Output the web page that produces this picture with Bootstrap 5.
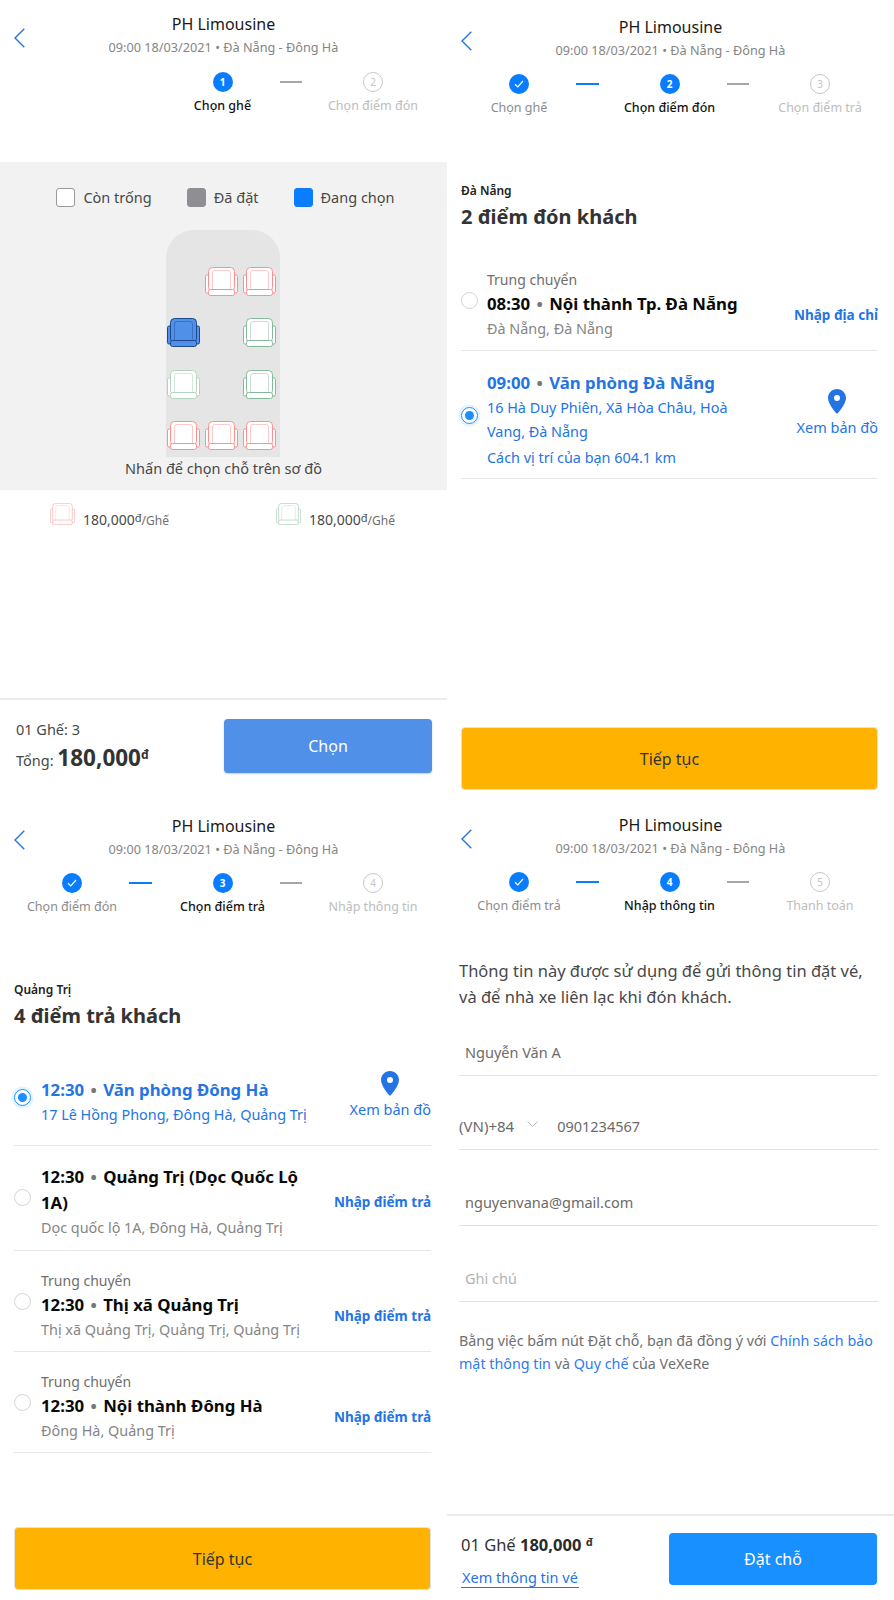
<!DOCTYPE html>
<html lang="vi">
<head>
<meta charset="utf-8">
<title>PH Limousine</title>
<link rel="stylesheet" href="https://cdn.jsdelivr.net/npm/bootstrap@5.3.0/dist/css/bootstrap.min.css">
<style>
body{margin:0;background:#fff;font-family:"Noto Sans","Open Sans","Liberation Sans",sans-serif;color:#484848;}
.board{display:grid;grid-template-columns:447px 447px;grid-template-rows:800px 800px;width:894px;height:1600px;overflow:hidden;}
.pane{display:flex;flex-direction:column;min-width:0;overflow:hidden;}
.head{position:relative;text-align:center;}
.head-a{padding-top:12px}.head-b{padding-top:15px}.head-c{padding-top:14px}.head-d{padding-top:13px}
.back{position:absolute;left:14px;width:11px;height:20px;}
.head-a .back{top:28px}.head-b .back{top:31px}.head-c .back{top:30px}.head-d .back{top:29px}
.ttl{font-size:16px;line-height:24px;color:#1a1a1a;}
.when{font-size:12.7px;line-height:22px;color:#858585;}
.steps{display:flex;justify-content:center;margin-top:13px;padding-right:2px;}
.head-a .steps{margin-top:14px}
.stp{width:128px;display:flex;flex-direction:column;align-items:center;}
.dot{width:20px;height:20px;border-radius:50%;background:#0a7cff;color:#fff;font-size:10px;font-weight:700;line-height:20px;display:flex;align-items:center;justify-content:center;}
.dot.off{background:#fff;border:1px solid #c8c8c8;color:#c4c4c4;font-weight:400;}
.stp-t{font-size:12.5px;line-height:18px;margin-top:5px;color:#8c8c8c;white-space:nowrap;}
.stp.now .stp-t{color:#141414;font-weight:500;}
.stp.todo .stp-t{color:#bdbdbd;}
.lnk{width:22.5px;height:2px;margin:9px 7px 0 -7px;background:#a6a6a6;flex:none;}
.lnk.ok{background:#0a7cff;}
.band{background:#f2f2f2;height:328px;margin-top:47px;display:flex;flex-direction:column;align-items:center;padding-top:24px;}
.lgd{display:flex;gap:35px;font-size:14.5px;line-height:22px;color:#484848;margin-left:4px;}
.box{width:19px;height:19px;border-radius:3px;border:1px solid #9a9a9a;background:#fff;margin-right:8px;}
.box.taken{background:#8e8e93;border-color:#8e8e93;}
.box.pick{background:#0a7cff;border-color:#0a7cff;}
.bus{width:114px;height:227px;margin:22px 2px 0 0;background:#e5e5e5;border-radius:28px 28px 0 0;padding:37px 0 0 1px;display:grid;grid-template-columns:repeat(3,38px);grid-auto-rows:51.4px;justify-items:start;align-content:start;}
.seat{width:33px;height:29px;display:block;}
.cap{font-size:14.5px;line-height:22px;color:#484848;}
.prices{display:flex;padding-left:50px;margin-top:12px;}
.prc{flex:none;width:226px;display:flex;align-items:flex-start;font-size:14px;line-height:22px;color:#484848;}
.prc .seat{width:25px;height:22px;opacity:.65;margin-right:8px;margin-top:1px}
.prc span{margin-top:5px}
.prc small{font-size:11px;vertical-align:3px;}
.prc em{font-style:normal;font-size:12px;color:#6e6e6e;}
.foot-a{margin-top:auto;border-top:2px solid #ececec;height:102px;padding:19px 15px 0 16px;display:flex;justify-content:space-between;}
.sum{font-size:14.5px;color:#484848;line-height:22px;margin-top:-1px;}
.sum .big{line-height:30px;margin-top:3px;}
.sum b{font-size:22.5px;font-weight:700;color:#333;}
.sum sup{font-size:12px;font-weight:700;top:-.6em;}
.go{width:208px;height:54px;background:#5090e8;border:0;border-radius:4px;color:#fff;font-size:16px;box-shadow:0 1px 2px rgba(0,0,0,.2);}
.body{padding:0 16px 10px 14px;flex:1;display:flex;flex-direction:column;}
.city{font-size:12px;line-height:18px;font-weight:600;color:#222;margin-top:65px;}
.hd2{font-size:20px;line-height:28px;font-weight:700;color:#333;margin:3px 0 0;}
.opt{display:flex;align-items:center;border-bottom:1px solid #e6e6e6;}
.r-p1{height:88px;margin-top:32px;padding-bottom:4px}
.r-p2{height:128px;padding-top:11px}
.r-d1{height:88px;margin-top:28px}
.r-d2{height:105px;padding-top:8px}
.r-d3{height:101px;padding-top:9px}
.rad{flex:none;width:17px;height:17px;border-radius:50%;border:1px solid #d4d4d4;background:#fff;margin:0 9px 9px 0;position:relative;}
.pane-c .rad{margin-right:10px}
.rad.on{border:1.5px solid #1890ff;box-shadow:0 0 0 2.5px #e6f3ff;}
.rad.on::after{content:"";position:absolute;inset:3px;border-radius:50%;background:#1890ff;}
.inf{flex:1;min-width:0;}
.inf.nar{padding-right:36px}
.tag{font-size:14px;line-height:23px;color:#6e6e6e;}
.nm{font-size:16.8px;line-height:26px;font-weight:700;color:#0a0a0a;}
.nm i{font-style:normal;color:#767676;margin:0 2px;}
.ad{font-size:14.4px;line-height:24px;color:#858585;}
.ad.tw{margin-top:2px}
.opt.sel .nm,.opt.sel .ad{color:#2474e5;}
.act{flex:none;text-align:right;font-size:13.5px;color:#2474e5;font-weight:700;white-space:nowrap;}
.act.low{margin-top:22px}
.act.mp{font-weight:400;text-align:center;font-size:14.5px;padding-bottom:12px;}
.act.mp svg{display:block;margin:0 auto 3px;}
.cta{margin-top:auto;height:63px;background:#ffb300;border:1px solid #e2e2e2;border-radius:4px;width:100%;font-size:16px;color:#333;}
.frm{padding:0 16px 0 12px;}
.note{font-size:16.5px;line-height:26px;color:#484848;margin:43px 0 0;}
.fld{border:0;border-bottom:1px solid #e3e3e3;border-radius:0;padding:0 6px;height:47px;font-size:14.5px;color:#6b6b6b;background:transparent;box-shadow:none;}
.fld::placeholder{color:#b3b3b3;}
.fld.f1{margin-top:19px}
.fld.f2{margin-top:29px}
.fld.f3{margin-top:29px}
.ph{display:flex;align-items:center;border-bottom:1px solid #e3e3e3;height:47px;margin-top:27px;font-size:15px;color:#6b6b6b;}
.ph .fld{border:0;height:46px;padding:0 0 0 19px;font-size:14.5px;}
.chev{margin-left:13px;margin-bottom:3px;flex:none;}
.terms{font-size:14.3px;line-height:23px;color:#6e6e6e;margin:27px 0 0;}
.terms a{color:#2e7bf0;text-decoration:none;}
.foot-d{margin-top:auto;border-top:2px solid #ececec;height:86px;padding:17px 17px 0 14px;display:flex;justify-content:space-between;}
.tot{font-size:16.5px;line-height:24px;color:#333;}
.tot b{font-weight:700;color:#2a2a2a;}
.tot sup{font-size:11px;font-weight:700;}
.see{display:inline-block;font-size:14.5px;line-height:20px;margin-top:10px;padding:0 1px;color:#2474e5;text-decoration:none;border-bottom:1px solid #2474e5;}
.book{width:208px;height:52px;background:#1890ff;border:0;border-radius:4px;color:#fff;font-size:16px;}
.sp{--f:#fff;--a:#ff8f8f;--b:#ffc9c9}
.sg{--f:#fff;--a:#84b99b;--b:#c6e0d0}
.sl{--f:#fff;--a:#b2d5c1;--b:#d5e8dc}
.ss{--f:#5090e8;--a:#1c4a8a;--b:#3a70c4}
</style>
</head>
<body>
<svg width="0" height="0" class="position-absolute">
<defs>
<symbol id="st" viewBox="0 0 33 29">
<rect x=".5" y="8" width="5" height="18" rx="1.5" style="fill:var(--f);stroke:var(--a)"/>
<rect x="27.5" y="8" width="5" height="18" rx="1.5" style="fill:var(--f);stroke:var(--a)"/>
<rect x="3.500" y=".5" width="26" height="24" rx="4" style="fill:var(--f);stroke:var(--a)"/>
<rect x="7.500" y="3.500" width="18" height="20" rx="2.500" style="fill:var(--f);stroke:var(--b)"/>
<rect x="3.500" y="22.500" width="26" height="6" rx="2" style="fill:var(--f);stroke:var(--a)"/>
</symbol>
<symbol id="ch" viewBox="0 0 11 20"><path d="M10.300 .8 1 10l9.300 9.200" fill="none" stroke="#2474e5" stroke-width="1.400"/></symbol>
<symbol id="pin" viewBox="0 0 18 25"><path fill="#2474e5" fill-rule="evenodd" d="M9 0C4 0 0 4 0 9c0 6.500 9 16 9 16s9-9.500 9-16c0-5-4-9-9-9zm0 6a3 3 0 1 1 0 6 3 3 0 0 1 0-6z"/></symbol>
<symbol id="ck" viewBox="0 0 12 12"><path d="M2 6.300 4.800 9 10 3" fill="none" stroke="#fff" stroke-width="1.200"/></symbol>
</defs>
</svg>
<main class="board">

<section class="pane">
<header class="head head-a">
<svg class="back"><use href="#ch"/></svg>
<div class="ttl">PH Limousine</div>
<div class="when">09:00 18/03/2021 • Đà Nẵng - Đông Hà</div>
<div class="steps">
<div class="stp"></div><div class="lnk invisible"></div>
<div class="stp now"><div class="dot">1</div><div class="stp-t">Chọn ghế</div></div><div class="lnk"></div>
<div class="stp todo"><div class="dot off">2</div><div class="stp-t">Chọn điểm đón</div></div>
</div>
</header>
<div class="band">
<div class="lgd">
<div class="d-flex align-items-center"><div class="box"></div>Còn trống</div>
<div class="d-flex align-items-center"><div class="box taken"></div>Đã đặt</div>
<div class="d-flex align-items-center"><div class="box pick"></div>Đang chọn</div>
</div>
<div class="bus">
<div></div><svg class="seat sp"><use href="#st"/></svg><svg class="seat sp"><use href="#st"/></svg>
<svg class="seat ss"><use href="#st"/></svg><div></div><svg class="seat sg"><use href="#st"/></svg>
<svg class="seat sl"><use href="#st"/></svg><div></div><svg class="seat sg"><use href="#st"/></svg>
<svg class="seat sp"><use href="#st"/></svg><svg class="seat sp"><use href="#st"/></svg><svg class="seat sp"><use href="#st"/></svg>
</div>
<div class="cap">Nhấn để chọn chỗ trên sơ đồ</div>
</div>
<div class="prices">
<div class="prc"><svg class="seat sp"><use href="#st"/></svg><span>180,000<small>đ</small><em>/Ghế</em></span></div>
<div class="prc"><svg class="seat sg"><use href="#st"/></svg><span>180,000<small>đ</small><em>/Ghế</em></span></div>
</div>
<footer class="foot-a">
<div class="sum"><div>01 Ghế: 3</div><div class="big">Tổng: <b>180,000<sup>đ</sup></b></div></div>
<button type="button" class="btn go">Chọn</button>
</footer>
</section>

<section class="pane">
<header class="head head-b">
<svg class="back"><use href="#ch"/></svg>
<div class="ttl">PH Limousine</div>
<div class="when">09:00 18/03/2021 • Đà Nẵng - Đông Hà</div>
<div class="steps">
<div class="stp"><div class="dot"><svg width="12" height="12"><use href="#ck"/></svg></div><div class="stp-t">Chọn ghế</div></div><div class="lnk ok"></div>
<div class="stp now"><div class="dot">2</div><div class="stp-t">Chọn điểm đón</div></div><div class="lnk"></div>
<div class="stp todo"><div class="dot off">3</div><div class="stp-t">Chọn điểm trả</div></div>
</div>
</header>
<div class="body">
<div class="city">Đà Nẵng</div>
<h2 class="hd2">2 điểm đón khách</h2>
<div class="opt r-p1"><div class="rad"></div><div class="inf"><div class="tag">Trung chuyển</div><div class="nm">08:30 <i>•</i> Nội thành Tp. Đà Nẵng</div><div class="ad">Đà Nẵng, Đà Nẵng</div></div><div class="act low">Nhập địa chỉ</div></div>
<div class="opt sel r-p2"><div class="rad on"></div><div class="inf nar"><div class="nm">09:00 <i>•</i> Văn phòng Đà Nẵng</div><div class="ad">16 Hà Duy Phiên, Xã Hòa Châu, Hoà<br>Vang, Đà Nẵng</div><div class="ad tw">Cách vị trí của bạn 604.1 km</div></div><div class="act mp"><svg width="18" height="25"><use href="#pin"/></svg>Xem bản đồ</div></div>
<button type="button" class="btn cta">Tiếp tục</button>
</div>
</section>

<section class="pane pane-c">
<header class="head head-c">
<svg class="back"><use href="#ch"/></svg>
<div class="ttl">PH Limousine</div>
<div class="when">09:00 18/03/2021 • Đà Nẵng - Đông Hà</div>
<div class="steps">
<div class="stp"><div class="dot"><svg width="12" height="12"><use href="#ck"/></svg></div><div class="stp-t">Chọn điểm đón</div></div><div class="lnk ok"></div>
<div class="stp now"><div class="dot">3</div><div class="stp-t">Chọn điểm trả</div></div><div class="lnk"></div>
<div class="stp todo"><div class="dot off">4</div><div class="stp-t">Nhập thông tin</div></div>
</div>
</header>
<div class="body">
<div class="city">Quảng Trị</div>
<h2 class="hd2">4 điểm trả khách</h2>
<div class="opt sel r-d1"><div class="rad on"></div><div class="inf"><div class="nm">12:30 <i>•</i> Văn phòng Đông Hà</div><div class="ad">17 Lê Hồng Phong, Đông Hà, Quảng Trị</div></div><div class="act mp"><svg width="18" height="25"><use href="#pin"/></svg>Xem bản đồ</div></div>
<div class="opt r-d2"><div class="rad"></div><div class="inf"><div class="nm">12:30 <i>•</i> Quảng Trị (Dọc Quốc Lộ<br>1A)</div><div class="ad">Dọc quốc lộ 1A, Đông Hà, Quảng Trị</div></div><div class="act">Nhập điểm trả</div></div>
<div class="opt r-d3"><div class="rad"></div><div class="inf"><div class="tag">Trung chuyển</div><div class="nm">12:30 <i>•</i> Thị xã Quảng Trị</div><div class="ad">Thị xã Quảng Trị, Quảng Trị, Quảng Trị</div></div><div class="act low">Nhập điểm trả</div></div>
<div class="opt r-d3"><div class="rad"></div><div class="inf"><div class="tag">Trung chuyển</div><div class="nm">12:30 <i>•</i> Nội thành Đông Hà</div><div class="ad">Đông Hà, Quảng Trị</div></div><div class="act low">Nhập điểm trả</div></div>
<button type="button" class="btn cta">Tiếp tục</button>
</div>
</section>

<section class="pane">
<header class="head head-d">
<svg class="back"><use href="#ch"/></svg>
<div class="ttl">PH Limousine</div>
<div class="when">09:00 18/03/2021 • Đà Nẵng - Đông Hà</div>
<div class="steps">
<div class="stp"><div class="dot"><svg width="12" height="12"><use href="#ck"/></svg></div><div class="stp-t">Chọn điểm trả</div></div><div class="lnk ok"></div>
<div class="stp now"><div class="dot">4</div><div class="stp-t">Nhập thông tin</div></div><div class="lnk"></div>
<div class="stp todo"><div class="dot off">5</div><div class="stp-t">Thanh toán</div></div>
</div>
</header>
<form class="d-flex flex-column flex-grow-1">
<div class="frm">
<p class="note">Thông tin này được sử dụng để gửi thông tin đặt vé, và để nhà xe liên lạc khi đón khách.</p>
<input class="form-control fld f1" value="Nguyễn Văn A">
<div class="ph"><span>(VN)+84</span><svg class="chev" width="11" height="7" viewBox="0 0 11 7"><path d="M.5 .5l5 5 5-5" fill="none" stroke="#bdbdbd"/></svg><input class="form-control fld" value="0901234567"></div>
<input class="form-control fld f2" value="nguyenvana@gmail.com">
<input class="form-control fld f3" placeholder="Ghi chú">
<p class="terms">Bằng việc bấm nút Đặt chỗ, bạn đã đồng ý với <a href="#">Chính sách bảo</a> <a href="#">mật thông tin</a> và <a href="#">Quy chế</a> của VeXeRe</p>
</div>
<footer class="foot-d">
<div><div class="tot">01 Ghế <b>180,000</b> <sup>đ</sup></div><a class="see" href="#">Xem thông tin vé</a></div>
<button type="button" class="btn book">Đặt chỗ</button>
</footer>
</form>
</section>

</main>
<script src="https://cdn.jsdelivr.net/npm/bootstrap@5.3.0/dist/js/bootstrap.bundle.min.js"></script>
</body>
</html>
